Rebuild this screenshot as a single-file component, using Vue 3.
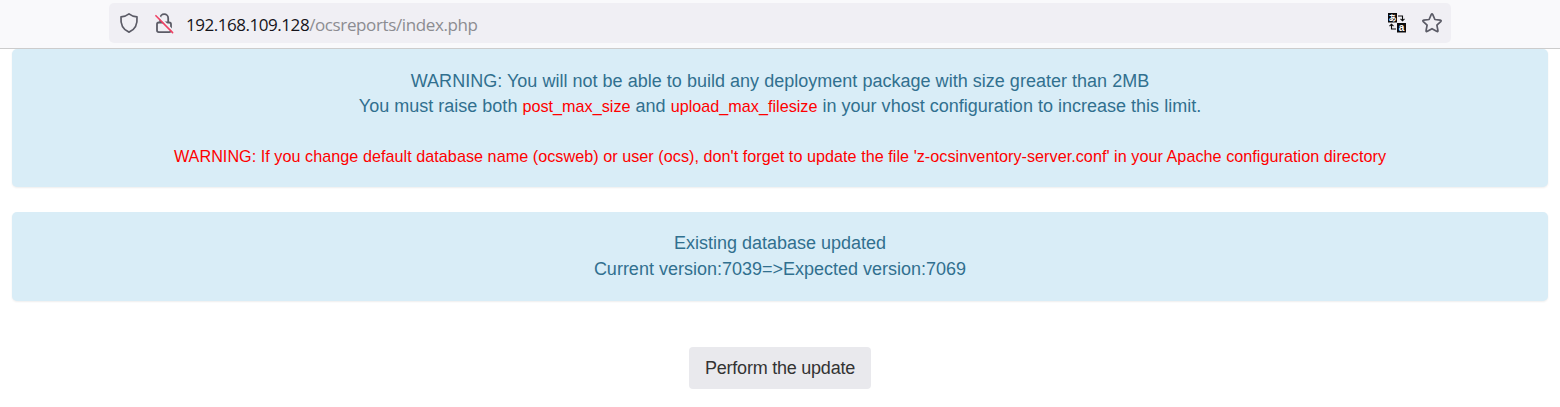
<script setup>
const url = { host: '192.168.109.128', path: '/ocsreports/index.php' }
</script>

<template>
  <div class="page">
    <header class="toolbar">
      <div class="address">
        <svg class="icon" width="20" height="22" viewBox="0 0 20 22" fill="none" stroke="#5b5b66" stroke-width="1.7" stroke-linejoin="round">
          <path d="M10 1.900C8 3.500 5.200 4.600 2 4.900C1.500 10.800 3.200 17.600 10 20.100C16.800 17.600 18.500 10.800 18 4.900C14.800 4.600 12 3.500 10 1.900Z" />
        </svg>
        <svg class="icon lock" width="20" height="22" viewBox="0 0 20 22" fill="none" stroke-linecap="round">
          <path d="M6.200 10.500V6.200a4 4 0 0 1 8 0V10.500M4.800 10.500h10.400a1.800 1.800 0 0 1 1.800 1.800v6a1.800 1.800 0 0 1-1.800 1.800H4.800a1.800 1.800 0 0 1-1.800-1.800v-6a1.800 1.800 0 0 1 1.800-1.800Z" stroke="#5b5b66" stroke-width="1.800" />
          <path d="M3 2.700 19.300 19.200" stroke="#f0eff4" stroke-width="2" />
          <path d="M1.900 3.700 18.600 20.600" stroke="#ef4063" stroke-width="1.600" />
        </svg>
        <div class="url">{{ url.host }}<span>{{ url.path }}</span></div>
        <svg class="icon" width="20" height="22" viewBox="0 0 20 22" fill="none">
          <path d="M1 1h9v9.500H1ZM10 11h9v9.500h-9Z" fill="#0c0c0d" />
          <text class="glyph kana" x="5.500" y="8.700">あ</text>
          <text class="glyph latin" x="14.500" y="18.800">a</text>
          <path d="M11 4h4.500v4.500M13.500 6.800l2 2 2-2M9 17H4.500v-4.500M2.500 14.200l2-2 2 2" stroke="#0c0c0d" stroke-width="1.100" />
        </svg>
        <svg class="icon star" width="22" height="22" viewBox="0 0 22 22" fill="none" stroke="#5b5b66" stroke-width="1.700" stroke-linejoin="round">
          <path d="M10.200 2.600Q11 1.200 11.800 2.600L13.900 7.500 19.200 8.100Q20.800 8.400 19.700 9.600L15.900 13.200 16.900 18.500Q17.100 20.100 15.600 19.300L11 16.700 6.400 19.300Q4.900 20.100 5.100 18.500L6.100 13.200 2.300 9.600Q1.200 8.400 2.800 8.100L8.100 7.500Z" />
        </svg>
      </div>
    </header>

    <main class="content">
      <section class="alert limits">
        <p class="l1">WARNING: You will not be able to build any deployment package with size greater than 2MB</p>
        <p class="l2">You must raise both <em>post_max_size</em> and <em>upload_max_filesize</em> in your vhost configuration to increase this limit.</p>
        <p class="l3"><em>WARNING: If you change default database name (ocsweb) or user (ocs), don't forget to update the file 'z-ocsinventory-server.conf' in your Apache configuration directory</em></p>
      </section>
      <section class="alert version">
        <p>Existing database updated</p>
        <p>Current version:7039=&gt;Expected version:7069</p>
      </section>
      <button class="update" type="button">Perform the update</button>
    </main>
  </div>
</template>

<style>
body {
  background: #fff;
}
</style>

<style scoped>
.page {
  height: 407px;
  overflow: hidden;
  font-family: "Liberation Sans", Arial, sans-serif;
}
.toolbar {
  box-sizing: border-box;
  height: 49px;
  padding: 3px 109px 0;
  background: #f9f9fb;
  border-bottom: 1px solid #ccc;
}
.address {
  box-sizing: border-box;
  display: flex;
  align-items: center;
  height: 40px;
  padding: 0 8px 0 10px;
  border-radius: 5px;
  background: #f0eff4;
}
.icon {
  flex: none;
}
.glyph {
  fill: #fff;
  text-anchor: middle;
  font-weight: 700;
}
.kana {
  font-family: "Noto Sans CJK JP", sans-serif;
  font-size: 8px;
}
.latin {
  font-family: "Liberation Sans", sans-serif;
  font-size: 10px;
}
.lock {
  margin-left: 15px;
}
.star {
  margin-left: 14px;
}
.url {
  flex: 1;
  margin-left: 12px;
  padding-top: 3px;
  font-family: "Open Sans", "Noto Sans", sans-serif;
  font-size: 17px;
  line-height: 24px;
  letter-spacing: -0.46px;
  color: #15141a;
}
.url span {
  color: #8c8c91;
  letter-spacing: -0.38px;
}
.content {
  display: flex;
  flex-direction: column;
  align-items: center;
  padding: 0 12px;
}
.alert {
  box-sizing: border-box;
  width: 100%;
  border-radius: 5px;
  background: #d9edf7;
  box-shadow: 0 1px 2px rgba(0, 0, 0, 0.07);
  color: #31708f;
  font-size: 18px;
  line-height: 25.7px;
  text-align: center;
  white-space: nowrap;
}
.alert p {
  margin: 0;
}
.alert em {
  font-style: normal;
  font-size: 16.2px;
  color: #f00;
}
.limits {
  height: 138px;
  padding-top: 20px;
  line-height: 25px;
}
.l1 {
  letter-spacing: 0.02px;
}
.l2 {
  letter-spacing: 0.01px;
}
.l3 {
  padding-top: 25px;
  letter-spacing: 0.03px;
}
.version {
  height: 89px;
  margin-top: 25px;
  padding-top: 19px;
}
.update {
  width: 182px;
  height: 42px;
  margin-top: 46px;
  padding: 0;
  border: 0;
  border-radius: 4px;
  background: #e9e9ed;
  color: #333;
  font: 18px "Liberation Sans", Arial, sans-serif;
  letter-spacing: -0.23px;
}
</style>
